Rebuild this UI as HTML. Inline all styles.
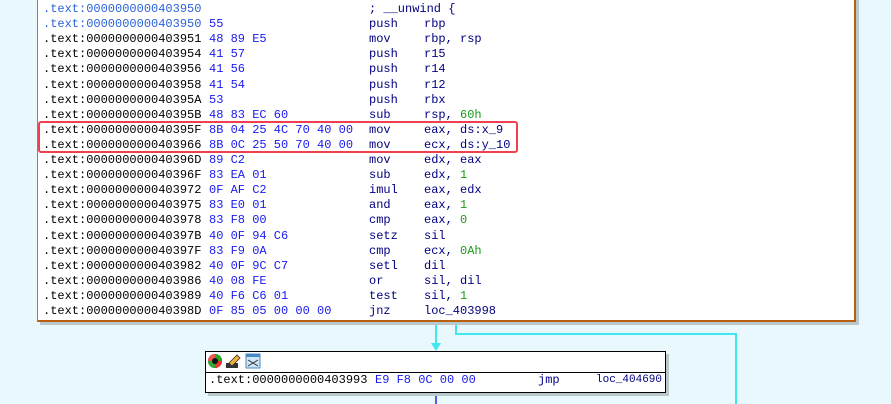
<!DOCTYPE html>
<html><head><style>
body{margin:0;width:891px;height:404px;background:#e9f8fd;position:relative;overflow:hidden;font-family:"Liberation Mono",monospace;font-size:12px;}
#main{position:absolute;left:37px;top:-5px;width:816px;height:324px;background:#fff;border:1px solid #c8732a;border-right:2px solid #b8600f;border-bottom:2px solid #b8600f;box-shadow:3px 3px 0 #b9c8cc;}
.r{position:absolute;left:5px;height:15px;line-height:15px;white-space:pre;}
.a{color:#000}.ab{color:#2a62d8}.b{color:#1a1af0}.m{color:#000080}.n{color:#1a9a1a}
.mn{position:absolute;left:326px}.op{position:absolute;left:381px}.by{position:absolute;left:166px}
#red{position:absolute;left:38px;top:121px;width:480px;height:32px;border:2px solid #f04050;border-radius:3px;box-sizing:border-box;}
#sub{position:absolute;left:205px;top:351px;width:459px;height:40px;background:#fff;border:1px solid #000;box-shadow:3px 3px 0 #b9c8cc;}
#sub .hd{height:20px;border-bottom:1px solid #000;position:relative}
</style></head><body>
<svg width="891" height="404" style="position:absolute;left:0;top:0">
<path d="M436 320V345" stroke="#3fe8f0" stroke-width="2" fill="none"/>
<path d="M431 343L436 351L441 343Z" fill="#3fe8f0"/>
<path d="M456 320V334H736V404" stroke="#3fe8f0" stroke-width="2" fill="none"/>
<path d="M436 392V404" stroke="#5060e0" stroke-width="2"/>
</svg>
<div id="main">
<div class="r" style="top:6px"><span class="ab">.text:0000000000403950</span><span class="mn m">; __unwind {</span></div>
<div class="r" style="top:21px"><span class="ab">.text:0000000000403950</span><span class="by b">55</span><span class="mn m">push</span><span class="op m">rbp</span></div>
<div class="r" style="top:36px"><span class="a">.text:0000000000403951</span><span class="by b">48 89 E5</span><span class="mn m">mov</span><span class="op m">rbp, rsp</span></div>
<div class="r" style="top:51px"><span class="a">.text:0000000000403954</span><span class="by b">41 57</span><span class="mn m">push</span><span class="op m">r15</span></div>
<div class="r" style="top:66px"><span class="a">.text:0000000000403956</span><span class="by b">41 56</span><span class="mn m">push</span><span class="op m">r14</span></div>
<div class="r" style="top:82px"><span class="a">.text:0000000000403958</span><span class="by b">41 54</span><span class="mn m">push</span><span class="op m">r12</span></div>
<div class="r" style="top:97px"><span class="a">.text:000000000040395A</span><span class="by b">53</span><span class="mn m">push</span><span class="op m">rbx</span></div>
<div class="r" style="top:112px"><span class="a">.text:000000000040395B</span><span class="by b">48 83 EC 60</span><span class="mn m">sub</span><span class="op m">rsp, <span class="n">60h</span></span></div>
<div class="r" style="top:127px"><span class="a">.text:000000000040395F</span><span class="by b">8B 04 25 4C 70 40 00</span><span class="mn m">mov</span><span class="op m">eax, ds:x_9</span></div>
<div class="r" style="top:142px"><span class="a">.text:0000000000403966</span><span class="by b">8B 0C 25 50 70 40 00</span><span class="mn m">mov</span><span class="op m">ecx, ds:y_10</span></div>
<div class="r" style="top:157px"><span class="a">.text:000000000040396D</span><span class="by b">89 C2</span><span class="mn m">mov</span><span class="op m">edx, eax</span></div>
<div class="r" style="top:172px"><span class="a">.text:000000000040396F</span><span class="by b">83 EA 01</span><span class="mn m">sub</span><span class="op m">edx, <span class="n">1</span></span></div>
<div class="r" style="top:187px"><span class="a">.text:0000000000403972</span><span class="by b">0F AF C2</span><span class="mn m">imul</span><span class="op m">eax, edx</span></div>
<div class="r" style="top:202px"><span class="a">.text:0000000000403975</span><span class="by b">83 E0 01</span><span class="mn m">and</span><span class="op m">eax, <span class="n">1</span></span></div>
<div class="r" style="top:217px"><span class="a">.text:0000000000403978</span><span class="by b">83 F8 00</span><span class="mn m">cmp</span><span class="op m">eax, <span class="n">0</span></span></div>
<div class="r" style="top:233px"><span class="a">.text:000000000040397B</span><span class="by b">40 0F 94 C6</span><span class="mn m">setz</span><span class="op m">sil</span></div>
<div class="r" style="top:248px"><span class="a">.text:000000000040397F</span><span class="by b">83 F9 0A</span><span class="mn m">cmp</span><span class="op m">ecx, <span class="n">0Ah</span></span></div>
<div class="r" style="top:263px"><span class="a">.text:0000000000403982</span><span class="by b">40 0F 9C C7</span><span class="mn m">setl</span><span class="op m">dil</span></div>
<div class="r" style="top:278px"><span class="a">.text:0000000000403986</span><span class="by b">40 08 FE</span><span class="mn m">or</span><span class="op m">sil, dil</span></div>
<div class="r" style="top:293px"><span class="a">.text:0000000000403989</span><span class="by b">40 F6 C6 01</span><span class="mn m">test</span><span class="op m">sil, <span class="n">1</span></span></div>
<div class="r" style="top:308px"><span class="a">.text:000000000040398D</span><span class="by b">0F 85 05 00 00 00</span><span class="mn m">jnz</span><span class="op m">loc_403998</span></div>
</div>
<div id="red"></div>
<div id="sub">
<div class="hd">
<svg width="70" height="20" style="position:absolute;left:1px;top:1px">
<circle cx="8" cy="8" r="7" fill="#222"/>
<path d="M8 8L8 1A7 7 0 0 1 15 8Z" fill="#2a2"/><path d="M8 8L15 8A7 7 0 0 1 8 15Z" fill="#e33"/><path d="M8 8L8 15A7 7 0 0 1 1 8Z" fill="#3a3"/><path d="M8 8L1 8A7 7 0 0 1 8 1Z" fill="#e55"/><circle cx="8" cy="8" r="3" fill="#111"/>
<rect x="19" y="10" width="12" height="5" fill="#333"/><path d="M22 10L30 2L33 5L25 13Z" fill="#f0b030" stroke="#333" stroke-width="0.8"/>
<rect x="39" y="1" width="14" height="14" fill="#cfe4f4" stroke="#4a8ac0"/><rect x="39" y="1" width="14" height="3" fill="#4a8ac0"/><path d="M41 7L51 13M41 13L51 7" stroke="#333"/>
</svg></div>
<div class="r" style="top:21px;left:3px"><span class="a">.text:0000000000403993</span><span class="by b" style="left:166px">E9 F8 0C 00 00</span><span class="m" style="position:absolute;left:329px">jmp</span><span class="m" style="position:absolute;left:387px;font-size:11px;line-height:15px">loc_404690</span></div>
</div>
</body></html>
